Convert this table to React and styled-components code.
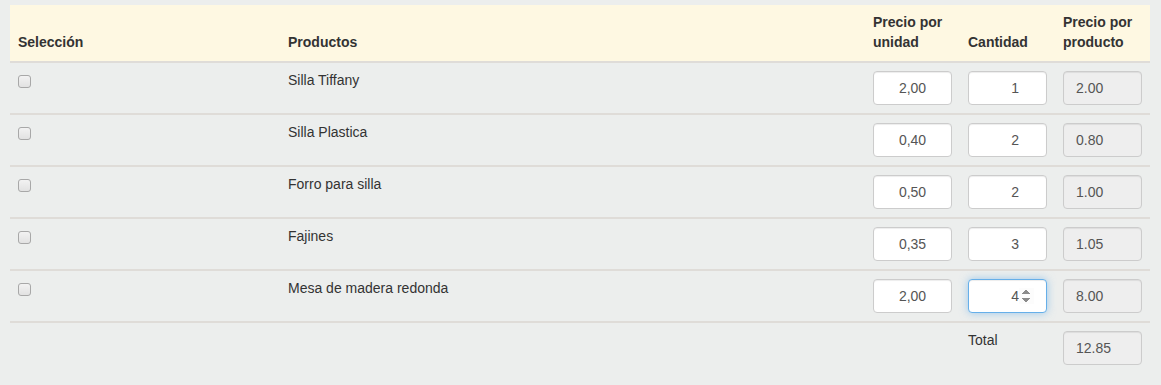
import React, { useState } from "react";
import styled, { createGlobalStyle } from "styled-components";

const GlobalStyle = createGlobalStyle`
  html, body {
    margin: 0;
    background: #eceeed;
  }
  body {
    font-family: "Liberation Sans", Arial, sans-serif;
    font-size: 14px;
    line-height: 1.42857;
    color: #333;
  }
`;

const Page = styled.div`
  padding: 5px 10px 0;
`;

const Table = styled.table`
  width: 1140px;
  border-collapse: collapse;
  border-spacing: 0;
  table-layout: fixed;
  margin-bottom: 20px;
`;

const HeadRow = styled.tr`
  background: #fef8e2;
`;

const HeadCell = styled.th`
  padding: 8px;
  text-align: left;
  vertical-align: bottom;
  font-weight: bold;
  border-bottom: 2px solid #dfdcd8;
`;

const Row = styled.tr`
  border-bottom: ${(p) => (p.$last ? "none" : "2px solid #dfdcd8")};
`;

const Cell = styled.td`
  padding: 8px;
  vertical-align: top;
`;

const Check = styled.input`
  appearance: none;
  -webkit-appearance: none;
  display: block;
  box-sizing: border-box;
  margin: 4px 0 0;
  width: 13px;
  height: 13px;
  border: 1px solid #a8a8a8;
  border-radius: 3px;
  background: linear-gradient(#f2f2f2, #e2e2e2);
  &:checked {
    background: #1a73e8;
    border-color: #1a73e8;
  }
`;

const Field = styled.input`
  display: block;
  box-sizing: border-box;
  width: 100%;
  height: 34px;
  padding: 6px 12px;
  font-family: inherit;
  font-size: 14px;
  color: #555;
  background: ${(p) => (p.disabled ? "#eeeeee" : "#fff")};
  border: 1px solid #ccc;
  border-radius: 4px;
  box-shadow: inset 0 1px 1px rgba(0, 0, 0, 0.075);
  text-align: ${(p) => p.$align || "left"};
  opacity: 1;
  -webkit-text-fill-color: #555;
  &:focus {
    outline: 0;
    border-color: #66afe9;
    box-shadow: inset 0 1px 1px rgba(0, 0, 0, 0.075),
      0 0 8px rgba(102, 175, 233, 0.6);
  }
`;

const products = [
  { name: "Silla Tiffany", price: "2,00", qty: 1, total: "2.00" },
  { name: "Silla Plastica", price: "0,40", qty: 2, total: "0.80" },
  { name: "Forro para silla", price: "0,50", qty: 2, total: "1.00" },
  { name: "Fajines", price: "0,35", qty: 3, total: "1.05" },
  { name: "Mesa de madera redonda", price: "2,00", qty: 4, total: "8.00" },
];

export default function App() {
  const [items, setItems] = useState(products);

  const setQty = (i, v) => {
    setItems(items.map((it, j) => (j === i ? { ...it, qty: v } : it)));
  };

  return (
    <Page>
      <GlobalStyle />
      <Table>
        <colgroup>
          <col style={{ width: 270 }} />
          <col />
          <col style={{ width: 95 }} />
          <col style={{ width: 95 }} />
          <col style={{ width: 95 }} />
        </colgroup>
        <thead>
          <HeadRow>
            <HeadCell>Selección</HeadCell>
            <HeadCell>Productos</HeadCell>
            <HeadCell>Precio por unidad</HeadCell>
            <HeadCell>Cantidad</HeadCell>
            <HeadCell>Precio por producto</HeadCell>
          </HeadRow>
        </thead>
        <tbody>
          {items.map((item, i) => (
            <Row key={item.name}>
              <Cell>
                <Check type="checkbox" />
              </Cell>
              <Cell>{item.name}</Cell>
              <Cell>
                <Field type="text" defaultValue={item.price} $align="center" />
              </Cell>
              <Cell>
                <Field
                  type="number"
                  value={item.qty}
                  $align="right"
                  autoFocus={i === items.length - 1}
                  onChange={(e) => setQty(i, e.target.value)}
                />
              </Cell>
              <Cell>
                <Field type="text" value={item.total} disabled readOnly />
              </Cell>
            </Row>
          ))}
          <Row $last>
            <Cell />
            <Cell />
            <Cell />
            <Cell>Total</Cell>
            <Cell>
              <Field type="text" value="12.85" disabled readOnly />
            </Cell>
          </Row>
        </tbody>
      </Table>
    </Page>
  );
}
